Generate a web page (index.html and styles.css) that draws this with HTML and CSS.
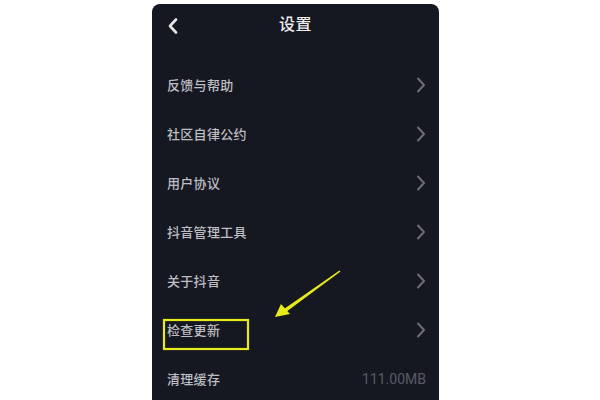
FILE: index.html
```html
<!DOCTYPE html>
<html lang="zh-CN">
<head>
<meta charset="utf-8">
<title>设置</title>
<link rel="stylesheet" href="styles.css">
</head>
<body>
<div class="screen">
  <header class="topbar">
    <svg class="back" width="12" height="16" viewBox="0 0 12 16"><path d="M9 1.5 L3 8 L9 14.5" fill="none" stroke="#e6e6e8" stroke-width="2.6" stroke-linecap="round" stroke-linejoin="round"/></svg>
    <h1 class="title">设置</h1>
  </header>
  <ul class="menu">
    <li class="item"><span class="label">反馈与帮助</span><svg class="chev" width="10" height="16" viewBox="0 0 10 16"><path d="M2 1.5 L8 8 L2 14.5" fill="none" stroke="#6c6d74" stroke-width="2" stroke-linecap="round" stroke-linejoin="round"/></svg></li>
    <li class="item"><span class="label">社区自律公约</span><svg class="chev" width="10" height="16" viewBox="0 0 10 16"><path d="M2 1.5 L8 8 L2 14.5" fill="none" stroke="#6c6d74" stroke-width="2" stroke-linecap="round" stroke-linejoin="round"/></svg></li>
    <li class="item"><span class="label">用户协议</span><svg class="chev" width="10" height="16" viewBox="0 0 10 16"><path d="M2 1.5 L8 8 L2 14.5" fill="none" stroke="#6c6d74" stroke-width="2" stroke-linecap="round" stroke-linejoin="round"/></svg></li>
    <li class="item"><span class="label">抖音管理工具</span><svg class="chev" width="10" height="16" viewBox="0 0 10 16"><path d="M2 1.5 L8 8 L2 14.5" fill="none" stroke="#6c6d74" stroke-width="2" stroke-linecap="round" stroke-linejoin="round"/></svg></li>
    <li class="item"><span class="label">关于抖音</span><svg class="chev" width="10" height="16" viewBox="0 0 10 16"><path d="M2 1.5 L8 8 L2 14.5" fill="none" stroke="#6c6d74" stroke-width="2" stroke-linecap="round" stroke-linejoin="round"/></svg></li>
    <li class="item"><span class="label">检查更新</span><svg class="chev" width="10" height="16" viewBox="0 0 10 16"><path d="M2 1.5 L8 8 L2 14.5" fill="none" stroke="#6c6d74" stroke-width="2" stroke-linecap="round" stroke-linejoin="round"/></svg></li>
    <li class="item"><span class="label">清理缓存</span><span class="value">111.00MB</span></li>
  </ul>
</div>
<!-- highlight marking the update entry -->
<svg class="markup" width="600" height="400" viewBox="0 0 600 400">
  <rect x="164" y="320" width="84" height="29" fill="none" stroke="#e9ea1c" stroke-width="2.2"/>
  <path d="M340.5 271.5 L339.5 270.5 L284 309 L286 312 Z" fill="#e9ea1c"/>
  <path d="M275 317 L281 304 L290 314 Z" fill="#e9ea1c"/>
</svg>
</body>
</html>
```
FILE: styles.css
```css
html, body {
  margin: 0;
  padding: 0;
  background: #ffffff;
}

body {
  width: 600px;
  height: 400px;
  overflow: hidden;
  position: relative;
  font-family: "Noto Sans CJK SC", "Noto Sans", sans-serif;
}

.screen {
  margin: 4px 0 0 152px;
  width: 287px;
  height: 396px;
  background: #161821;
  border-radius: 8px 8px 0 0;
  box-sizing: border-box;
}

.topbar {
  height: 42px;
  box-sizing: border-box;
  padding-bottom: 4px;
  display: flex;
  align-items: center;
  justify-content: center;
  position: relative;
}

.back {
  position: absolute;
  left: 15px;
  top: 14px;
}

.title {
  margin: 0;
  font-size: 16px;
  font-weight: 500;
  color: #ececee;
  letter-spacing: 0.5px;
}

.menu {
  list-style: none;
  margin: 0;
  padding: 14px 0 0 0;
}

.item {
  height: 49px;
  display: flex;
  align-items: center;
  justify-content: space-between;
  padding: 0 13px 0 15px;
}

.label {
  font-size: 13px;
  font-weight: 500;
  letter-spacing: 0.3px;
  color: #bdbec3;
}

.chev {
  display: block;
}

.value {
  font-size: 14px;
  color: #595b63;
  font-family: "Roboto", "Noto Sans", sans-serif;
}

.markup {
  position: absolute;
  left: 0;
  top: 0;
  pointer-events: none;
}
```
